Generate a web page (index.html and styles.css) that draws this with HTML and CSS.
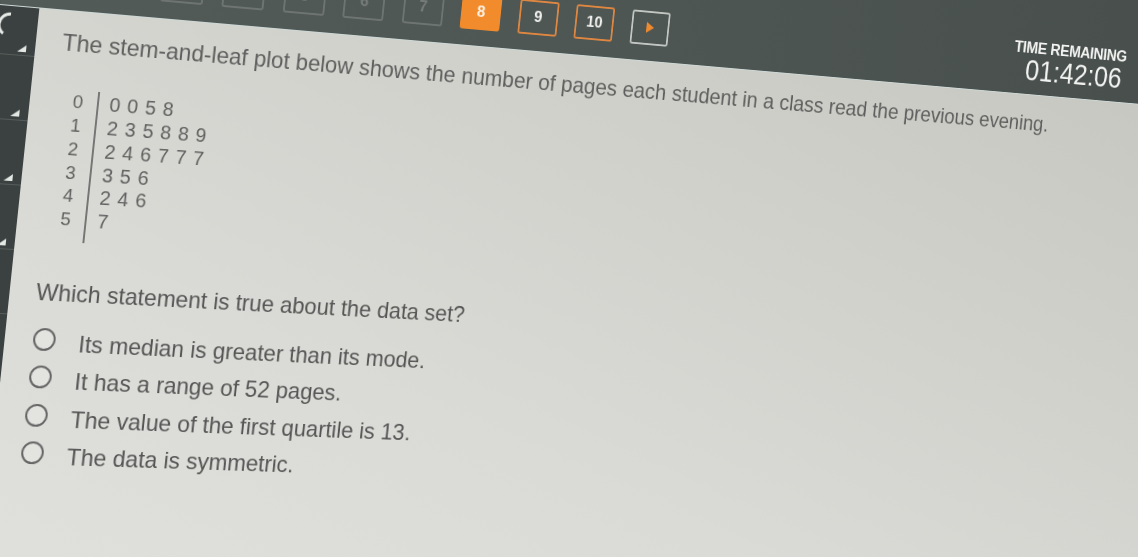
FILE: index.html
```html
<!DOCTYPE html>
<html lang="en">
<head>
<meta charset="utf-8">
<title>Question 8</title>
<link rel="stylesheet" href="styles.css">
</head>
<body>
<div class="screen">
  <header class="topbar">
    <nav class="pager">
      <span class="page-btn">1</span>
      <span class="page-btn">2</span>
      <span class="page-btn">3</span>
      <span class="page-btn">4</span>
      <span class="page-btn">5</span>
      <span class="page-btn">6</span>
      <span class="page-btn">7</span>
      <span class="page-btn current">8</span>
      <span class="page-btn visited">9</span>
      <span class="page-btn visited">10</span>
      <span class="page-btn next"><span class="next-arrow"></span></span>
    </nav>
    <div class="timer">
      <div class="timer-label">TIME REMAINING</div>
      <div class="timer-value">01:42:06</div>
    </div>
  </header>
  <div class="main">
    <aside class="sidebar">
      <div class="tile tile-first">
        <svg class="tile-icon" width="16" height="28" viewBox="0 0 16 28"><path d="M14 4 A11 11 0 0 0 3 15 A11 11 0 0 0 8 24" fill="none" stroke="#e6ebe8" stroke-width="3"/></svg>
        <span class="corner"></span>
      </div>
      <div class="tile"><span class="corner"></span></div>
      <div class="tile"><span class="corner"></span></div>
      <div class="tile"><span class="corner"></span></div>
      <div class="tile"><span class="corner"></span></div>
      <div class="tile"><span class="corner"></span></div>
    </aside>
    <main class="content">
      <p class="prompt">The stem-and-leaf plot below shows the number of pages each student in a class read the previous evening.</p>
      <div class="stemleaf">
        <div class="stems">
          <div>0</div><div>1</div><div>2</div><div>3</div><div>4</div><div>5</div>
        </div>
        <div class="stem-rule"></div>
        <div class="leaves">
          <div>0058</div><div>235889</div><div>246777</div><div>356</div><div>246</div><div>7</div>
        </div>
      </div>
      <p class="question">Which statement is true about the data set?</p>
      <ul class="options">
        <li class="option"><span class="radio"></span><span class="option-text">Its median is greater than its mode.</span></li>
        <li class="option"><span class="radio"></span><span class="option-text">It has a range of 52 pages.</span></li>
        <li class="option"><span class="radio"></span><span class="option-text">The value of the first quartile is 13.</span></li>
        <li class="option"><span class="radio"></span><span class="option-text">The data is symmetric.</span></li>
      </ul>
    </main>
  </div>
</div>
</body>
</html>
```

FILE: styles.css
```css
html, body {
  margin: 0;
  padding: 0;
  width: 1138px;
  height: 557px;
  overflow: hidden;
  background: #4c5451;
}

.screen {
  width: 1420px;
  height: 860px;
  display: flex;
  flex-direction: column;
  font-family: "Liberation Sans", Arial, sans-serif;
  transform-origin: 0 150px;
  transform: translate(0, -145px) rotate(5deg) skewX(-1deg) perspective(1000px) rotateY(6.89deg);
  filter: blur(0.45px);
}

/* ---------- top bar ---------- */
.topbar {
  height: 150px;
  flex: none;
  box-sizing: border-box;
  display: flex;
  align-items: flex-start;
  padding-left: 31.5px;
  padding-right: 107px;
  background: linear-gradient(90deg, #535b58 0%, #4e5653 50%, #474e4b 100%);
  border-bottom: 1px solid #cdd8d6;
}

.pager {
  display: flex;
  gap: 20.5px;
  margin-top: 95px;
}

.page-btn {
  width: 45px;
  height: 36.5px;
  box-sizing: border-box;
  border: 2px solid #6d7471;
  border-radius: 3px;
  display: flex;
  align-items: center;
  justify-content: center;
  font-size: 17px;
  font-weight: bold;
  color: #757c79;
}

.page-btn.current {
  background: #f28b2c;
  border-color: #f28b2c;
  color: #fdf3e8;
}

.page-btn.visited {
  border-color: #df8741;
  color: #f1f1ef;
}

.page-btn.next {
  border-color: #c3c7c3;
}

.next-arrow {
  width: 0;
  height: 0;
  border-left: 9px solid #f08a2e;
  border-top: 6px solid transparent;
  border-bottom: 6px solid transparent;
}

.timer {
  margin-left: auto;
  margin-top: 86px;
  text-align: right;
  color: #f3f4f2;
}

.timer-label {
  font-size: 18.5px;
  line-height: 20px;
  font-weight: bold;
  letter-spacing: -0.4px;
}

.timer-value {
  font-size: 33px;
  line-height: 32px;
  padding-right: 4px;
}

/* ---------- body ---------- */
.main {
  flex: 1;
  display: flex;
}

.sidebar {
  width: 40px;
  flex: none;
  background: #3b4140;
  display: flex;
  flex-direction: column;
}

.tile {
  height: 61px;
  flex: none;
  position: relative;
  display: flex;
  justify-content: flex-end;
  align-items: flex-end;
  padding: 0 9px 3px 0;
  border-bottom: 1px solid #555c5a;
}

.tile-first {
  height: 45px;
}

.tile-icon {
  position: absolute;
  left: -2px;
  top: 4px;
}

.corner {
  width: 0;
  height: 0;
  border-left: 9px solid transparent;
  border-bottom: 7px solid #e3e8e5;
}

.content {
  flex: 1;
  box-sizing: border-box;
  padding-left: 27px;
  color: #5c5d5c;
  background: linear-gradient(200deg, #c6c7c0 0%, #d0d1cb 30%, #dadbd6 60%, #e2e3df 100%);
}

.prompt {
  margin: 18px 0 0;
  font-size: 24px;
  line-height: 28px;
  white-space: nowrap;
  color: #5e5f5e;
}

.stemleaf {
  display: flex;
  align-items: flex-start;
  margin-top: 33.2px;
  margin-left: 17px;
  color: #606160;
}

.stems {
  font-size: 19px;
  line-height: 23.8px;
  width: 11px;
}

.stem-rule {
  width: 2px;
  height: 153.7px;
  margin-left: 14px;
  background: #747574;
}

.leaves {
  margin-left: 11px;
  font-size: 20.5px;
  line-height: 23.8px;
  letter-spacing: 7.2px;
}

.question {
  margin: 37.8px 0 0;
  font-size: 24px;
  line-height: 28px;
  white-space: nowrap;
  color: #555655;
}

.options {
  list-style: none;
  margin: 18.6px 0 0;
  padding: 0;
}

.option {
  display: flex;
  align-items: flex-start;
  height: 38.2px;
  line-height: 38.2px;
  font-size: 24px;
  color: #555655;
  white-space: nowrap;
}

.radio {
  width: 23px;
  height: 23px;
  box-sizing: border-box;
  flex: none;
  margin: 4px 0 0 1.5px;
  border: 2.5px solid #656665;
  border-radius: 50%;
  background: #e3e4e0;
}

.option-text {
  margin-left: 24.5px;
}
```
